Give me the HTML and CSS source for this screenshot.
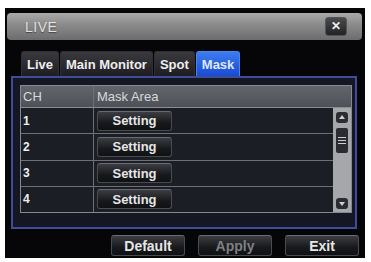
FILE: index.html
```html
<!DOCTYPE html>
<html lang="en">
<head>
  <meta charset="UTF-8">
  <title>LIVE</title>
  <link rel="stylesheet" href="styles.css">
</head>
<body>
  <div class="window">
    <div class="titlebar">
      <span class="title">LIVE</span>
      <button class="close">&#x2715;</button>
    </div>

    <div class="tabs">
      <div class="tab">Live</div>
      <div class="tab">Main Monitor</div>
      <div class="tab">Spot</div>
      <div class="tab active">Mask</div>
    </div>

    <div class="panel">
      <div class="grid">
        <div class="head">
          <div class="col-ch">CH</div>
          <div class="col-area">Mask Area</div>
        </div>
        <div class="body">
          <div class="rows">
            <div class="row"><div class="col-ch">1</div><div class="col-area"><button class="btn small">Setting</button></div></div>
            <div class="row"><div class="col-ch">2</div><div class="col-area"><button class="btn small">Setting</button></div></div>
            <div class="row"><div class="col-ch">3</div><div class="col-area"><button class="btn small">Setting</button></div></div>
            <div class="row"><div class="col-ch">4</div><div class="col-area"><button class="btn small">Setting</button></div></div>
          </div>
          <div class="scrollbar">
            <div class="arrow up"></div>
            <div class="thumb"><i></i><i></i><i></i></div>
            <div class="arrow down"></div>
          </div>
        </div>
      </div>
    </div>

    <div class="actions">
      <button class="btn">Default</button>
      <button class="btn disabled">Apply</button>
      <button class="btn">Exit</button>
    </div>
  </div>
</body>
</html>
```

FILE: styles.css
```css
body {
  margin: 0;
  background: #fff;
  font-family: 'Liberation Sans', Arial, sans-serif;
}
.window {
  margin: 8px 0 0 5px;
  width: 360px;
  height: 250px;
  box-sizing: border-box;
  background: #060608;
  padding: 5px 3px 0 2px;
  display: flex;
  flex-direction: column;
}
.titlebar {
  height: 27px;
  border-radius: 4px;
  background: linear-gradient(#a9a9a9, #8a8a8a 45%, #6c6c6c);
  display: flex;
  align-items: center;
  justify-content: space-between;
  padding: 0 15px 0 18px;
}
.title {
  color: #e4e4e4;
  font-size: 14px;
  letter-spacing: 0.5px;
  text-shadow: 0 1px 1px #444;
}
.close {
  width: 22px;
  height: 19px;
  border: 1px solid #555;
  border-radius: 3px;
  background: linear-gradient(#4a4a4e, #232326);
  color: #eee;
  font-size: 12px;
  font-weight: bold;
  padding: 0;
  line-height: 17px;
}
.tabs {
  display: flex;
  margin: 11px 0 0 14px;
  height: 25px;
  gap: 1px;
}
.tab {
  color: #eee;
  font-size: 13px;
  font-weight: bold;
  padding: 0 5px;
  line-height: 25px;
  border-radius: 3px 3px 0 0;
  background: linear-gradient(#3a3a3e, #1e1e22);
  border: 1px solid #2f2f34;
  border-bottom: none;
}
.tab.active {
  background: linear-gradient(#3d7bf0, #1a4bd0);
  border-color: #4b86f0;
  color: #dfe8ff;
}
.panel {
  margin-left: 4px;
  width: 346px;
  height: 153px;
  box-sizing: border-box;
  border: 2px solid #3e4c9c;
  background: #151822;
  padding: 7px 3px 0 7px;
}
.grid {
  border: 1px solid #85888f;
  height: 126px;
  display: flex;
  flex-direction: column;
}
.head {
  display: flex;
  height: 21px;
  background: linear-gradient(#62656c, #4e5158);
  color: #d8d8dc;
  font-size: 13px;
  line-height: 21px;
  border-bottom: 1px solid #8a8d93;
}
.col-ch {
  width: 73px;
  padding-left: 2px;
  box-sizing: border-box;
  border-right: 1px solid #6d7077;
}
.col-area {
  padding-left: 3px;
}
.body {
  display: flex;
  flex: 1;
}
.rows {
  flex: 1;
  display: flex;
  flex-direction: column;
}
.row {
  display: flex;
  flex: 1;
  align-items: center;
  background: #1c1e26;
  border-bottom: 1px solid #6d7077;
  color: #eee;
  font-size: 12px;
  font-weight: bold;
}
.row:last-child {
  border-bottom: none;
}
.row .col-ch {
  align-self: stretch;
  display: flex;
  align-items: center;
}
.btn {
  font-family: 'Liberation Sans', Arial, sans-serif;
  font-size: 14px;
  font-weight: bold;
  color: #e6e6e6;
  background: linear-gradient(#3c3d42, #18191c 60%, #101113);
  border: 1px solid #4a4b50;
  border-top-color: #6a6b70;
  border-radius: 3px;
  width: 74px;
  height: 21px;
  padding: 0;
}
.btn.small {
  width: 75px;
  height: 20px;
  font-size: 13px;
}
.btn.disabled {
  color: #7f8084;
}
.scrollbar {
  width: 18px;
  background: #a6a7aa;
  display: flex;
  flex-direction: column;
  align-items: center;
  padding: 4px 0 3px;
  box-sizing: border-box;
}
.arrow {
  width: 12px;
  height: 11px;
  border-radius: 3px;
  background: #2a2c31;
  position: relative;
}
.arrow::after {
  content: '';
  position: absolute;
  left: 3px;
  border-left: 3px solid transparent;
  border-right: 3px solid transparent;
}
.arrow.up::after {
  top: 3px;
  border-bottom: 4px solid #d0d0d0;
}
.arrow.down {
  margin-top: auto;
}
.arrow.down::after {
  top: 4px;
  border-top: 4px solid #d0d0d0;
}
.thumb {
  margin-top: 5px;
  width: 12px;
  height: 25px;
  border-radius: 2px;
  background: #2a2c31;
  display: flex;
  flex-direction: column;
  align-items: center;
  justify-content: center;
  gap: 2px;
}
.thumb i {
  width: 8px;
  height: 1px;
  background: #cfcfcf;
}
.actions {
  display: flex;
  justify-content: flex-end;
  gap: 13px;
  margin-top: 6px;
  padding-right: 3px;
}
```
